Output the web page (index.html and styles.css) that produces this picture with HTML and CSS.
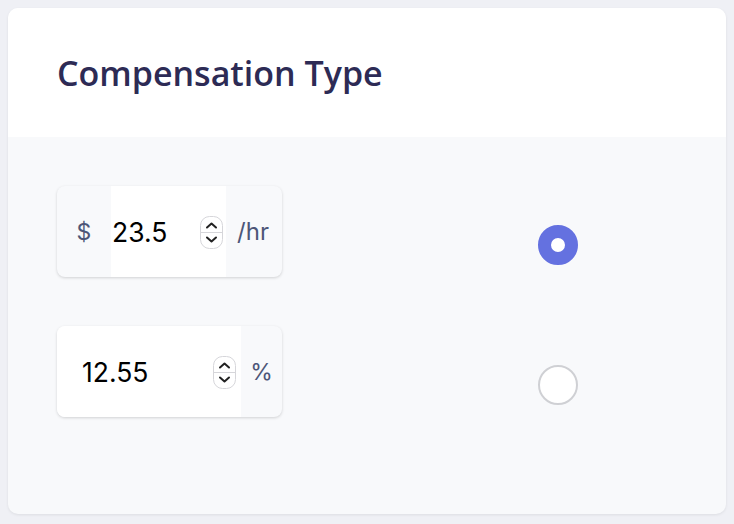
FILE: index.html
```html
<!DOCTYPE html>
<html lang="en">
<head>
<meta charset="UTF-8">
<meta name="viewport" content="width=device-width, initial-scale=1.0">
<title>Compensation Type</title>
<link rel="stylesheet" href="styles.css">
</head>
<body>

<div class="card">
    <div class="card-header">
        <h1>Compensation Type</h1>
    </div>
    <div class="card-body">
        <div class="option-row">
            <div class="input-group">
                <span class="addon prefix">$</span>
                <div class="field field-hourly">
                    <span class="value">23.5</span>
                    <span class="spinner">
                        <svg width="23" height="33" viewBox="0 0 23 33">
                            <rect x="0.5" y="0.5" width="22" height="32" rx="9" fill="#fff" stroke="#d6d6da"/>
                            <line x1="1" y1="16.5" x2="22" y2="16.5" stroke="#d6d6da"/>
                            <path d="M7 11.5 L11.5 7.5 L16 11.5" fill="none" stroke="#222" stroke-width="2" stroke-linecap="round" stroke-linejoin="round"/>
                            <path d="M7 21.5 L11.5 25.5 L16 21.5" fill="none" stroke="#222" stroke-width="2" stroke-linecap="round" stroke-linejoin="round"/>
                        </svg>
                    </span>
                </div>
                <span class="addon suffix">/hr</span>
            </div>
            <span class="radio checked"></span>
        </div>

        <div class="option-row">
            <div class="input-group">
                <div class="field field-percent">
                    <span class="value">12.55</span>
                    <span class="spinner">
                        <svg width="23" height="33" viewBox="0 0 23 33">
                            <rect x="0.5" y="0.5" width="22" height="32" rx="9" fill="#fff" stroke="#d6d6da"/>
                            <line x1="1" y1="16.5" x2="22" y2="16.5" stroke="#d6d6da"/>
                            <path d="M7 11.5 L11.5 7.5 L16 11.5" fill="none" stroke="#222" stroke-width="2" stroke-linecap="round" stroke-linejoin="round"/>
                            <path d="M7 21.5 L11.5 25.5 L16 21.5" fill="none" stroke="#222" stroke-width="2" stroke-linecap="round" stroke-linejoin="round"/>
                        </svg>
                    </span>
                </div>
                <span class="addon suffix suffix-short">%</span>
            </div>
            <span class="radio"></span>
        </div>
    </div>
</div>

</body>
</html>
```

FILE: styles.css
```css
body {
    margin: 0;
    padding: 8px;
    background-color: #eff0f5;
    font-family: "Open Sans", sans-serif;
}
.card {
    height: 506px;
    box-sizing: border-box;
    background-color: #f8f9fb;
    border-radius: 10px;
    overflow: hidden;
    box-shadow: 0 1px 3px rgba(0, 0, 0, 0.08);
}
.card-header {
    height: 129px;
    background-color: #fff;
    padding: 0 49px;
    display: flex;
    align-items: center;
}
h1 {
    margin: 0;
    font-size: 34px;
    font-weight: 600;
    color: #2d2b55;
    letter-spacing: 0;
}
.card-body {
    padding: 49px 49px;
    display: flex;
    flex-direction: column;
    gap: 49px;
}
.option-row {
    display: flex;
    align-items: flex-start;
}
.input-group {
    display: flex;
    width: 225px;
    height: 91px;
    border-radius: 8px;
    overflow: hidden;
    background-color: #f8f9fb;
    box-shadow: 0 1px 3px rgba(0, 0, 0, 0.16);
}
.addon {
    display: flex;
    align-items: center;
    justify-content: center;
    font-family: Inter, sans-serif;
    font-size: 24px;
    color: #4d5678;
}
.prefix {
    width: 54px;
    font-size: 23px;
}
.suffix {
    flex: 1;
    padding-right: 2px;
}
.suffix-short {
    padding-right: 0;
    font-size: 23px;
}
.field {
    display: flex;
    align-items: center;
    background-color: #fff;
    font-family: Inter, sans-serif;
    font-size: 26.5px;
    color: #000;
}
.field .value {
    flex: 1;
}
.field-hourly {
    width: 115px;
    padding: 0 3px 0 1px;
    box-sizing: border-box;
}
.field-percent {
    width: 184px;
    padding: 0 5px 0 25px;
    box-sizing: border-box;
}
.spinner {
    display: flex;
    margin-top: 2px;
}
.radio {
    width: 40px;
    height: 40px;
    box-sizing: border-box;
    margin-left: 256px;
    margin-top: 39px;
    border-radius: 50%;
    border: 2px solid #cfd0d4;
    background-color: #fff;
}
.radio.checked {
    border: 13px solid #6471e0;
    background-color: #fff;
}
```
